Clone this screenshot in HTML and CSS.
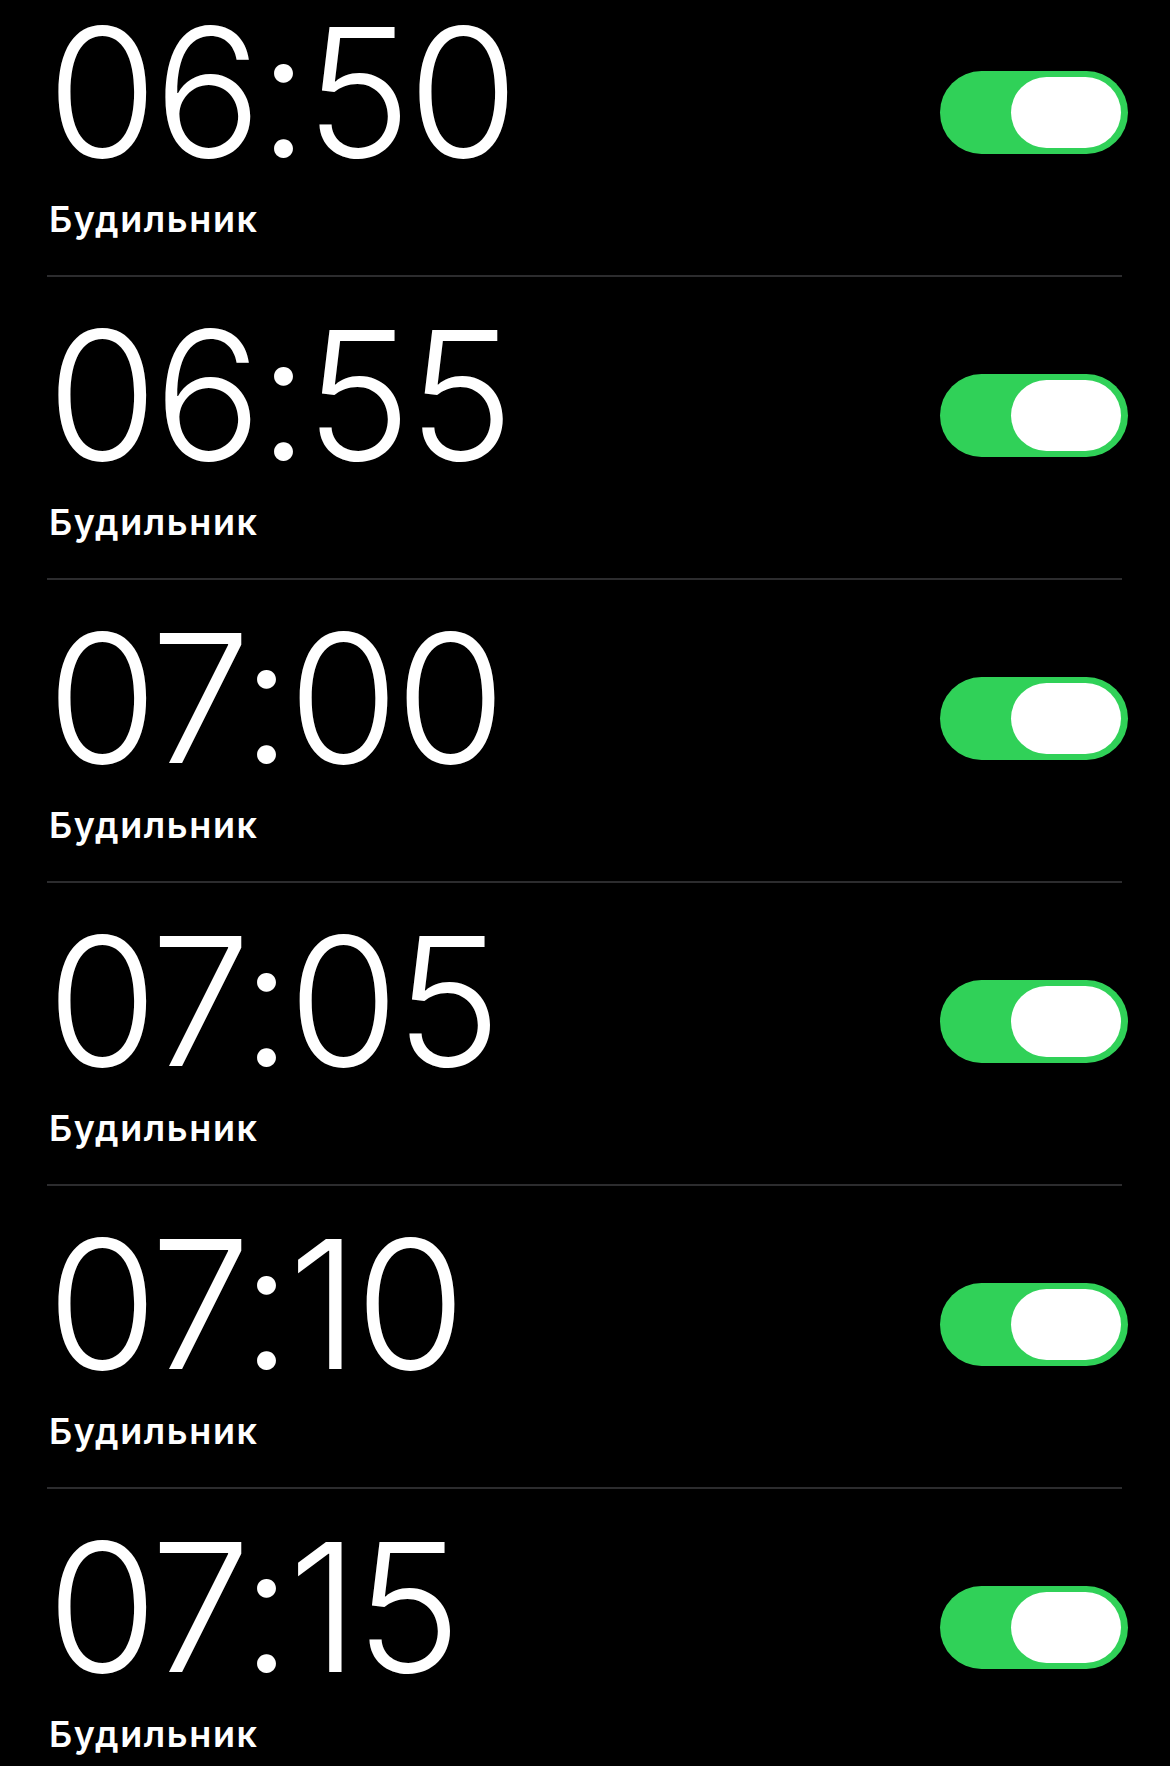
FILE: index.html
```html
<!DOCTYPE html>
<html lang="ru">
<head>
<meta charset="utf-8">
<title>Будильники</title>
<link rel="stylesheet" href="styles.css">
</head>
<body>
<main class="list">
  <div class="alarm">
    <div class="info"><div class="time">06:50</div><div class="label">Будильник</div></div>
    <div class="toggle"><span class="knob"></span></div>
  </div>
  <div class="alarm">
    <div class="info"><div class="time">06:55</div><div class="label">Будильник</div></div>
    <div class="toggle"><span class="knob"></span></div>
  </div>
  <div class="alarm">
    <div class="info"><div class="time">07:00</div><div class="label">Будильник</div></div>
    <div class="toggle"><span class="knob"></span></div>
  </div>
  <div class="alarm">
    <div class="info"><div class="time">07:05</div><div class="label">Будильник</div></div>
    <div class="toggle"><span class="knob"></span></div>
  </div>
  <div class="alarm">
    <div class="info"><div class="time">07:10</div><div class="label">Будильник</div></div>
    <div class="toggle"><span class="knob"></span></div>
  </div>
  <div class="alarm">
    <div class="info"><div class="time">07:15</div><div class="label">Будильник</div></div>
    <div class="toggle"><span class="knob"></span></div>
  </div>
</main>
</body>
</html>
```

FILE: styles.css
```css
html, body {
  margin: 0;
  padding: 0;
  background: #000;
}
body {
  height: 1766px;
  overflow: hidden;
  color: #fff;
  font-family: Inter, "Liberation Sans", sans-serif;
}
.list {
  margin-top: -26px;
}
.alarm {
  display: flex;
  justify-content: space-between;
  align-items: flex-start;
  margin: 0 48px 0 47px;
  padding: 29px 0 40px 0;
  border-bottom: 2px solid #2c2c2e;
  height: 232px;
}
.info {
  display: flex;
  flex-direction: column;
}
.time {
  font-size: 179px;
  line-height: 179px;
  font-weight: 300;
  letter-spacing: -3.5px;
}
.label {
  margin-top: 20px;
  margin-left: 2px;
  font-size: 36px;
  line-height: 34px;
  font-weight: 600;
  letter-spacing: 1.6px;
}
.toggle {
  margin-top: 68px;
  margin-right: -6px;
  width: 188px;
  height: 83px;
  border-radius: 42px;
  background: #30d158;
  display: flex;
  justify-content: flex-end;
  align-items: center;
  padding-right: 7px;
  box-sizing: border-box;
}
.knob {
  width: 110px;
  height: 71px;
  border-radius: 36px;
  background: #fff;
}
```
